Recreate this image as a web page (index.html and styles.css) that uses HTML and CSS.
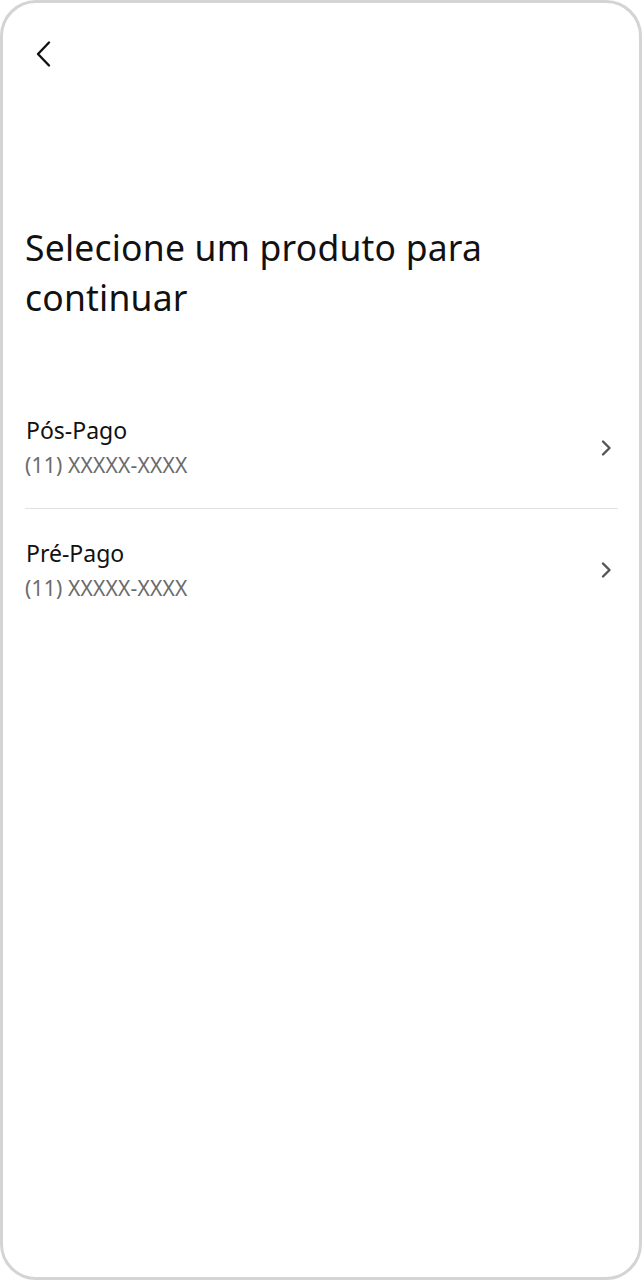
FILE: index.html
```html
<!DOCTYPE html>
<html lang="pt-BR">
<head>
  <meta charset="UTF-8">
  <meta name="viewport" content="width=device-width, initial-scale=1.0">
  <title>Selecione um produto</title>
  <link rel="stylesheet" href="styles.css">
</head>
<body>
  <div class="frame">
    <div class="top-bar">
      <button class="back-btn" aria-label="Voltar">
        <svg width="24" height="28" viewBox="0 0 24 28" fill="none">
          <path d="M17 2.5 L6 14 L17 25.5" stroke="#111" stroke-width="2.4" stroke-linecap="round" stroke-linejoin="round"/>
        </svg>
      </button>
    </div>

    <h1 class="title">Selecione um produto para continuar</h1>

    <ul class="product-list">
      <li class="product">
        <div class="product-info">
          <span class="product-name">Pós-Pago</span>
          <span class="product-number">(11) XXXXX-XXXX</span>
        </div>
        <svg class="chevron" width="14" height="20" viewBox="0 0 14 20" fill="none">
          <path d="M4 3.5 L10.5 10 L4 16.5" stroke="#555" stroke-width="2.4" stroke-linecap="round" stroke-linejoin="round"/>
        </svg>
      </li>
      <li class="product">
        <div class="product-info">
          <span class="product-name">Pré-Pago</span>
          <span class="product-number">(11) XXXXX-XXXX</span>
        </div>
        <svg class="chevron" width="14" height="20" viewBox="0 0 14 20" fill="none">
          <path d="M4 3.5 L10.5 10 L4 16.5" stroke="#555" stroke-width="2.4" stroke-linecap="round" stroke-linejoin="round"/>
        </svg>
      </li>
    </ul>
  </div>
</body>
</html>
```

FILE: styles.css
```css
body {
  margin: 0;
  background: #fff;
  font-family: "Noto Sans", "Open Sans", sans-serif;
  color: #111;
}

.frame {
  height: 1280px;
  box-sizing: border-box;
  border: 3px solid #d4d4d4;
  border-radius: 36px;
  padding: 0 21px 0 22px;
  background: #fff;
}

.top-bar {
  height: 190px;
  padding-top: 37px;
  box-sizing: border-box;
}

.back-btn {
  background: none;
  border: none;
  padding: 0;
  margin-left: 7px;
  cursor: pointer;
  display: block;
}

.title {
  margin: 29px 0 0 0;
  font-size: 35.5px;
  line-height: 50px;
  letter-spacing: 0.2px;
  font-weight: 400;
  color: #111;
  padding-right: 70px;
}

.product-list {
  list-style: none;
  margin: 65px 0 0 0;
  padding: 0;
}

.product {
  display: flex;
  align-items: center;
  justify-content: space-between;
  height: 122px;
  box-sizing: border-box;
  border-bottom: 1.5px solid #e2e2e2;
}

.product:last-child {
  border-bottom: none;
}

.product-info {
  display: flex;
  flex-direction: column;
  gap: 8px;
  padding-left: 1px;
}

.product-name {
  font-size: 23px;
  line-height: 28px;
  color: #111;
}

.product-number {
  font-size: 21px;
  line-height: 27px;
  letter-spacing: 0.2px;
  color: #6b6b6b;
  margin-left: -1px;
}

.chevron {
  margin-right: 5px;
}
```
